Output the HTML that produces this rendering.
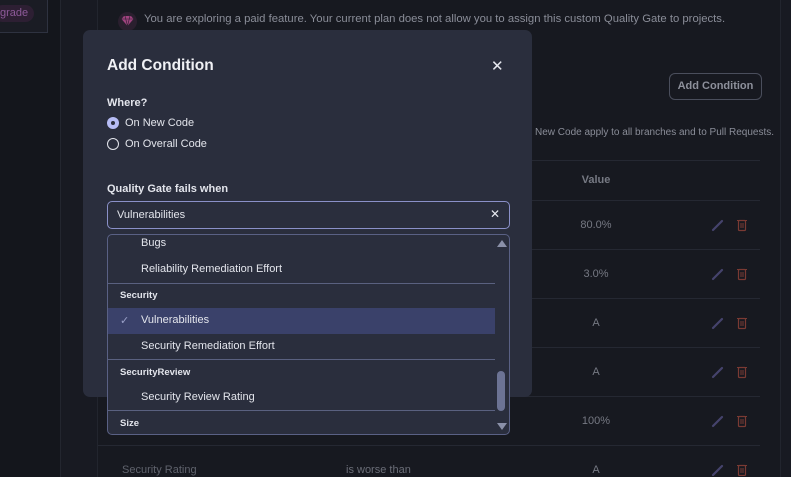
<!DOCTYPE html>
<html><head><meta charset="utf-8"><style>
*{box-sizing:border-box;margin:0;padding:0}
body{width:791px;height:477px;overflow:hidden;background:#181a22;font-family:"Liberation Sans",sans-serif;position:relative;color:#e6e8ef}
.a{position:absolute}
.side{left:0;top:0;width:61px;height:477px;background:#14161c;border-right:1px solid #23262f}
.box{left:0;top:0;width:48px;height:33px;border:1px solid #2e3240;border-top:none;border-left:none;background:#1a1c24}
.badge{left:-6px;top:5px;background:#2d1f33;color:#8e5a9a;font-size:11px;padding:2px 6px 3px 6px;border-radius:9px}
.main{left:97px;top:0;width:684px;height:477px;background:#171920;border-left:1px solid #22252e;border-right:1px solid #22252e}
.dim{color:#8a8d98;font-size:11px}
.row{left:98px;width:662px;height:1px;background:#252832}
.val{width:60px;text-align:center;left:566px;font-size:11px;color:#767983}
.modal{left:83px;top:30px;width:449px;height:367px;background:#2a2e3d;border-radius:7px}
.lbl{font-size:11px;font-weight:bold;color:#e3e5ec}
.opt{font-size:11px;color:#e3e5ec}
.dd{left:107px;top:234px;width:403px;height:201px;background:#2a2e3d;border:1px solid #5a6185;border-radius:5px;overflow:hidden}
.it{position:absolute;left:33px;font-size:11px;color:#e3e5ec}
.gh{position:absolute;left:12px;font-size:9.5px;font-weight:bold;color:#e3e5ec}
.sep{position:absolute;left:0;width:387px;height:1px;background:#5a6180}
</style></head><body>
<div class="a side"></div>
<div class="a box"></div>
<div class="a badge">grade</div>
<div class="a main"></div>
<div class="a" style="left:118px;top:12px;width:19px;height:19px;border-radius:50%;background:#2a1f2e"></div>
<svg class="a" style="left:121px;top:15px" width="13" height="12" viewBox="0 0 13 12"><path d="M3 1h7l2.5 3L6.5 11 .5 4z" fill="#a0437f"/><path d="M.5 4h12M4 1l2.5 10M9 1L6.5 11" stroke="#2a1f2e" stroke-width=".6" fill="none"/></svg>
<div class="a dim" style="left:144px;top:13px;font-size:11.3px">You are exploring a paid feature. Your current plan does not allow you to assign this custom Quality Gate to projects.</div>
<div class="a" style="left:669px;top:73px;width:93px;height:27px;border:1px solid #4a4e5c;border-radius:6px;color:#8d909b;font-size:11px;font-weight:bold;text-align:center;line-height:25px">Add Condition</div>
<div class="a dim" style="left:535px;top:127px;font-size:10px">New Code apply to all branches and to Pull Requests.</div>
<div class="a row" style="top:160px"></div>
<div class="a val" style="top:174px;font-weight:bold">Value</div>
<div class="a row" style="top:200px"></div>
<div class="a row" style="top:249px"></div>
<div class="a row" style="top:298px"></div>
<div class="a row" style="top:347px"></div>
<div class="a row" style="top:396px"></div>
<div class="a row" style="top:445px"></div>
<div class="a val" style="top:219px">80.0%</div>
<div class="a val" style="top:268px">3.0%</div>
<div class="a val" style="top:317px">A</div>
<div class="a val" style="top:366px">A</div>
<div class="a val" style="top:415px">100%</div>
<div class="a val" style="top:464px">A</div>
<div class="a dim" style="left:122px;top:464px;color:#5f626c">Security Rating</div>
<div class="a dim" style="left:346px;top:464px;color:#6a6d77">is worse than</div>
<svg class="a" style="left:710px;top:216px" width="40" height="260">
<g id="ic"><path d="M3 14L12 5" stroke="#45436c" stroke-width="2.2" stroke-linecap="round"/><rect x="28.5" y="4.5" width="7" height="10" rx="1" fill="none" stroke="#7a3a33" stroke-width="1.2"/><path d="M27 4.5h10M31 7v5M33 7v5" stroke="#7a3a33" stroke-width="1"/></g>
<use href="#ic" y="49"/><use href="#ic" y="98"/><use href="#ic" y="147"/><use href="#ic" y="196"/><use href="#ic" y="245"/>
</svg>
<div class="a modal"></div>
<div class="a" style="left:107px;top:57px;font-size:15.5px;font-weight:bold;color:#f0f1f5">Add Condition</div>
<div class="a" style="left:491px;top:57px;font-size:15px;color:#e6e8ef">✕</div>
<div class="a lbl" style="left:107px;top:97px">Where?</div>
<div class="a" style="left:107px;top:117px;width:12px;height:12px;border-radius:50%;background:#b6bcf5"></div>
<div class="a" style="left:111px;top:121px;width:4px;height:4px;border-radius:50%;background:#2a2e3d"></div>
<div class="a opt" style="left:125px;top:117px">On New Code</div>
<div class="a" style="left:107px;top:138px;width:12px;height:12px;border-radius:50%;border:1px solid #e3e5ec"></div>
<div class="a opt" style="left:125px;top:138px">On Overall Code</div>
<div class="a lbl" style="left:107px;top:183px">Quality Gate fails when</div>
<div class="a" style="left:107px;top:201px;width:403px;height:28px;border:1.5px solid #8a90c8;border-radius:5px"></div>
<div class="a opt" style="left:117px;top:209px">Vulnerabilities</div>
<div class="a" style="left:490px;top:207px;font-size:12px">✕</div>
<div class="a dd">
<div class="it" style="top:2px">Bugs</div>
<div class="it" style="top:28px">Reliability Remediation Effort</div>
<div class="sep" style="top:48px"></div>
<div class="gh" style="top:55px">Security</div>
<div style="position:absolute;left:0;top:73px;width:387px;height:26px;background:#3a416a"></div>
<div class="it" style="left:12px;top:79px;color:#9aa0c8">✓</div>
<div class="it" style="top:79px">Vulnerabilities</div>
<div class="it" style="top:105px">Security Remediation Effort</div>
<div class="sep" style="top:124px"></div>
<div class="gh" style="top:132px">SecurityReview</div>
<div class="it" style="top:156px">Security Review Rating</div>
<div class="sep" style="top:175px"></div>
<div class="gh" style="top:183px">Size</div>
<div style="position:absolute;left:389px;top:136px;width:8px;height:40px;background:#6c7394;border-radius:4px"></div>
<div style="position:absolute;left:389px;top:5px;width:0;height:0;border-left:5px solid transparent;border-right:5px solid transparent;border-bottom:7px solid #8a90a8"></div>
<div style="position:absolute;left:389px;top:188px;width:0;height:0;border-left:5px solid transparent;border-right:5px solid transparent;border-top:7px solid #8a90a8"></div>
</div>
</body></html>
